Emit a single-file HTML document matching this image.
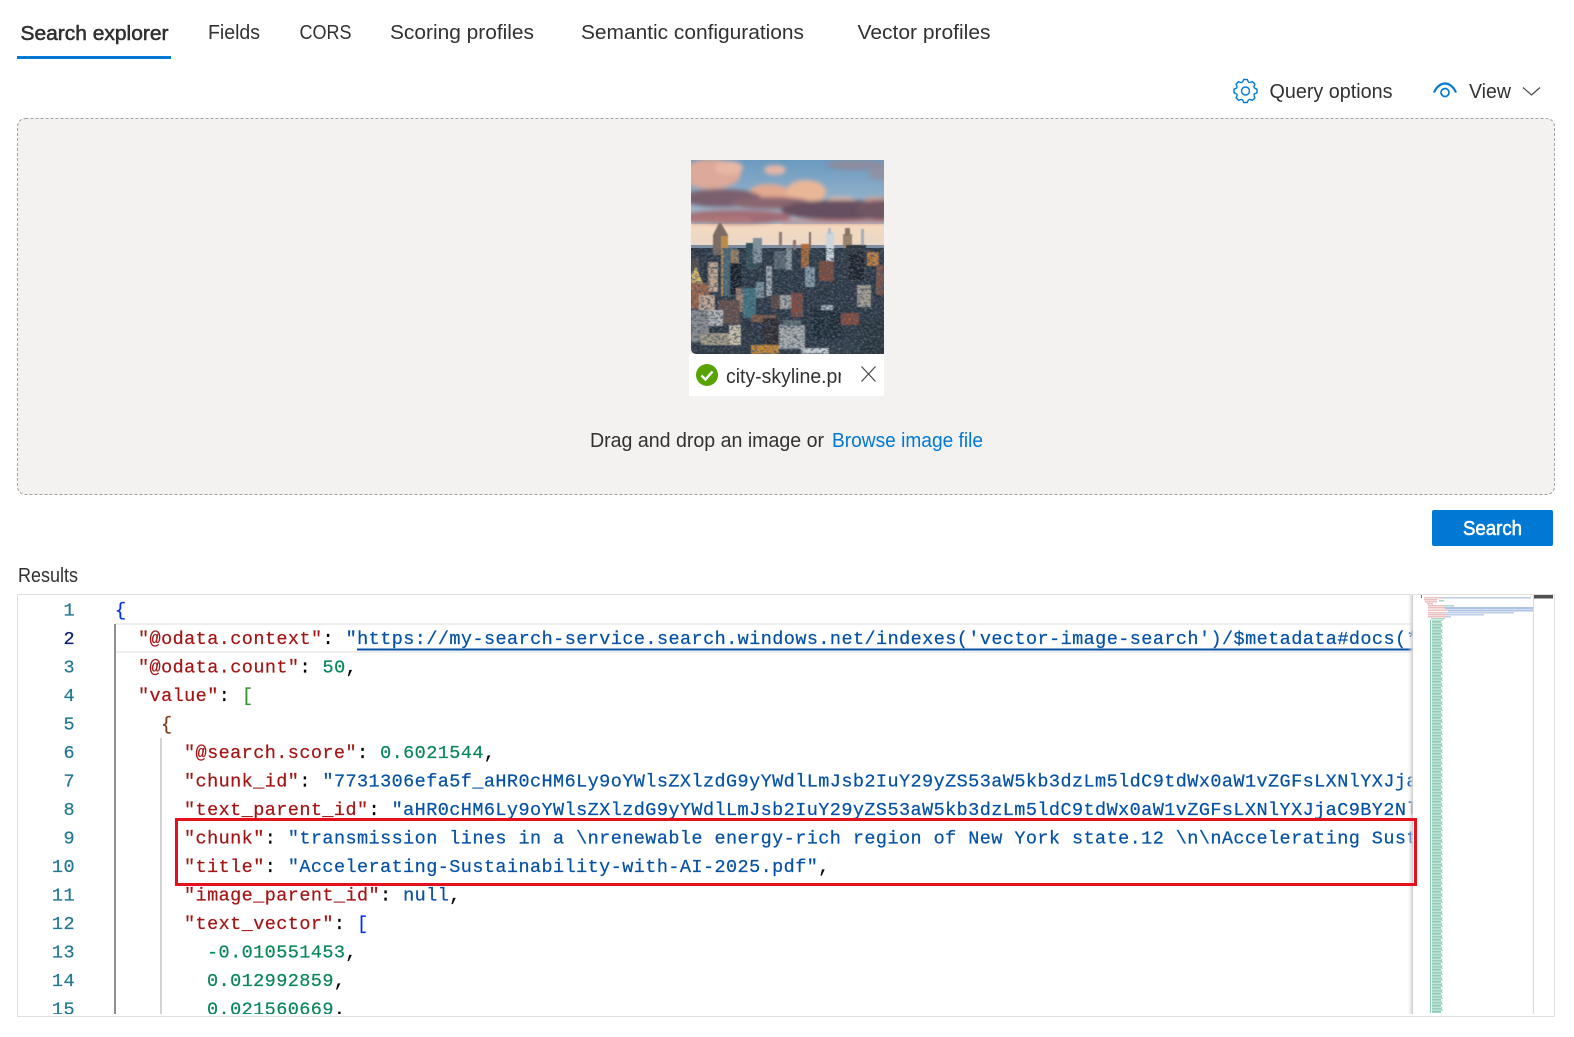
<!DOCTYPE html>
<html lang="en">
<head>
<meta charset="utf-8">
<title>Search explorer</title>
<style>
html,body{margin:0;padding:0;background:#fff;width:1574px;height:1037px;overflow:hidden}
svg{display:block}
.ui{font-family:"Liberation Sans",sans-serif;font-size:20px;fill:#323130}
.code{font-family:"Liberation Mono",monospace;font-size:18.5px;letter-spacing:.43px;white-space:pre;stroke-width:.22px}
.ln{fill:#237893;stroke:#237893;text-anchor:end}
.k{fill:#a31515;stroke:#a31515}.s{fill:#0451a5;stroke:#0451a5}.n{fill:#098658;stroke:#098658}.p{fill:#000;stroke:#000}
</style>
</head>
<body>
<svg width="1574" height="1037" viewBox="0 0 1574 1037" xmlns="http://www.w3.org/2000/svg">
<defs>
<clipPath id="codeclip"><rect x="100" y="595" width="1313" height="419"/></clipPath>
<clipPath id="lnclip"><rect x="18" y="595" width="90" height="419"/></clipPath>
<clipPath id="fileclip"><rect x="720" y="360" width="121" height="32"/></clipPath>
<clipPath id="imgclip"><path d="M691 160H884V354H697Q691 354 691 348Z"/></clipPath>
<linearGradient id="sky" x1="0" y1="0" x2="0" y2="1"><stop offset="0" stop-color="#6a9abf"/><stop offset="1" stop-color="#b5c4d2"/></linearGradient>
<linearGradient id="hor" x1="0" y1="0" x2="0" y2="1"><stop offset="0" stop-color="#f5d9be"/><stop offset="1" stop-color="#e9d8c8"/></linearGradient>
<linearGradient id="shadow" x1="0" y1="0" x2="1" y2="0"><stop offset="0" stop-color="#ddd" stop-opacity="0"/><stop offset="1" stop-color="#ccc"/></linearGradient>
<filter id="b2"><feGaussianBlur stdDeviation="2.2"/></filter>
<filter id="b1"><feGaussianBlur stdDeviation=".6"/></filter>
<filter id="nlight" x="0" y="0" width="100%" height="100%"><feTurbulence type="fractalNoise" baseFrequency=".38 .5" numOctaves="2" seed="7"/><feColorMatrix values="0 0 0 0 .8  0 0 0 0 .72  0 0 0 0 .66  3.2 0 0 0 -1.6"/></filter>
<filter id="ndark" x="0" y="0" width="100%" height="100%"><feTurbulence type="fractalNoise" baseFrequency=".3 .42" numOctaves="2" seed="21"/><feColorMatrix values="0 0 0 0 .06  0 0 0 0 .09  0 0 0 0 .13  3.2 0 0 0 -1.35"/></filter>
<pattern id="mmgreen" width="13" height="6" patternUnits="userSpaceOnUse">
<rect x="0" y="0" width="1" height="6" fill="#2f9a70" opacity=".55"/>
<rect x="2" y="0" width="10" height="1.500" fill="#5fb595" opacity=".65"/>
<rect x="2" y="1.500" width="11" height="1.500" fill="#8ccfb4" opacity=".6"/>
<rect x="2" y="3" width="9" height="1.500" fill="#5fb595" opacity=".7"/>
<rect x="2" y="4.500" width="10.500" height="1.500" fill="#8ccfb4" opacity=".55"/>
</pattern>
<path id="tooth" d="M-2.900-8.900L-1.800-11.500H1.800L2.900-8.900L4.240-8.340"/>
</defs>

<!-- tabs -->
<text class="ui" x="20.500" y="40" style="fill:#323130;stroke:#323130;stroke-width:.55px" textLength="148" lengthAdjust="spacingAndGlyphs">Search explorer</text>
<text class="ui" x="208" y="39" textLength="52" lengthAdjust="spacingAndGlyphs">Fields</text>
<text class="ui" x="299.500" y="39" textLength="52" lengthAdjust="spacingAndGlyphs">CORS</text>
<text class="ui" x="390" y="39" textLength="144" lengthAdjust="spacingAndGlyphs">Scoring profiles</text>
<text class="ui" x="581" y="39" textLength="223" lengthAdjust="spacingAndGlyphs">Semantic configurations</text>
<text class="ui" x="857.500" y="39" textLength="133" lengthAdjust="spacingAndGlyphs">Vector profiles</text>
<rect x="17" y="56" width="154" height="3" fill="#0078d4"/>

<!-- toolbar -->
<g fill="none" stroke="#0078d4" stroke-width="1.400" stroke-linejoin="round" transform="translate(1245.500 91)">
<use href="#tooth"/>
<use href="#tooth" transform="rotate(45)"/>
<use href="#tooth" transform="rotate(90)"/>
<use href="#tooth" transform="rotate(135)"/>
<use href="#tooth" transform="rotate(180)"/>
<use href="#tooth" transform="rotate(225)"/>
<use href="#tooth" transform="rotate(270)"/>
<use href="#tooth" transform="rotate(315)"/>
<circle r="4"/>
</g>
<text class="ui" x="1269.500" y="98" textLength="123" lengthAdjust="spacingAndGlyphs">Query options</text>
<g fill="none" stroke="#0078d4" stroke-width="2">
<path d="M1434 92.500C1437 85.500 1442 83.500 1445 83.500S1453 85.500 1456 92.500" stroke-width="2.200"/>
<circle cx="1445" cy="92.500" r="4" stroke-width="1.700"/>
</g>
<text class="ui" x="1469" y="98" textLength="42" lengthAdjust="spacingAndGlyphs">View</text>
<path d="M1523 87.500L1531.500 95L1540 87.500" fill="none" stroke="#484644" stroke-width="1.200"/>

<!-- drop zone -->
<rect x="17.500" y="118.500" width="1537" height="376" rx="8" fill="#f3f2f1" stroke="#a19f9d" stroke-width="1" stroke-dasharray="3 2"/>

<!-- image chip -->
<rect x="689" y="354" width="195" height="42" fill="#fff"/>
<g clip-path="url(#imgclip)">
<g transform="translate(691 160)">
<rect width="193" height="75" fill="url(#sky)"/>
<rect y="64" width="193" height="24" fill="url(#hor)"/>
<g filter="url(#b2)">
<ellipse cx="20" cy="14" rx="30" ry="15" fill="#dca99a"/>
<ellipse cx="38" cy="8" rx="14" ry="7" fill="#e8b8a4"/>
<ellipse cx="84" cy="10" rx="11" ry="5" fill="#e6b6a6"/>
<ellipse cx="165" cy="5" rx="30" ry="5" fill="#8d8c9e"/>
<ellipse cx="188" cy="14" rx="10" ry="6" fill="#8f92a4"/>
<ellipse cx="78" cy="33" rx="20" ry="9" fill="#e3a890"/>
<ellipse cx="115" cy="32" rx="20" ry="12" fill="#e9b698"/>
<ellipse cx="150" cy="40" rx="14" ry="3" fill="#e8bda8"/>
<ellipse cx="185" cy="40" rx="12" ry="3" fill="#d4a196"/>
<ellipse cx="30" cy="38" rx="40" ry="9" fill="#7a616e"/>
<ellipse cx="80" cy="43" rx="40" ry="6" fill="#8a666f"/>
<ellipse cx="150" cy="50" rx="60" ry="10" fill="#665060"/>
<ellipse cx="190" cy="50" rx="25" ry="10" fill="#6f5563"/>
<ellipse cx="45" cy="57" rx="55" ry="7" fill="#a06c74"/>
<rect x="0" y="56" width="60" height="7" fill="#ac7779"/>
<rect x="90" y="60" width="103" height="3" fill="#c08280"/>
</g>
<rect y="85" width="193" height="110" fill="#2a3542"/>
<rect y="85" width="193" height="3" fill="#7e8ea0"/>
<g filter="url(#b1)">
<path d="M22 75L28 63L30 63L37 75V95H22Z" fill="#7b6c66"/>
<rect x="30" y="76" width="7" height="60" fill="#b98c4c"/>
<rect x="32" y="88" width="14" height="48" fill="#4e6c78"/>
<rect x="40" y="90" width="8" height="45" fill="#9c7f60"/>
<rect x="55" y="83" width="12" height="26" fill="#325059"/>
<rect x="62" y="78" width="9" height="25" fill="#7f8f9b"/>
<rect x="88" y="72" width="3" height="14" fill="#8f7d78"/>
<rect x="83" y="91" width="12" height="18" fill="#5d6a76"/>
<rect x="95" y="88" width="6" height="22" fill="#8a949d"/>
<rect x="102" y="80" width="3" height="10" fill="#8d7670"/>
<rect x="110" y="84" width="8" height="24" fill="#b06a38"/>
<rect x="118" y="72" width="2" height="18" fill="#7e6a66"/>
<rect x="135" y="72" width="8" height="30" fill="#ccd4dc"/>
<rect x="137" y="68" width="3" height="6" fill="#b5bac4"/>
<rect x="152" y="74" width="9" height="14" fill="#97836e"/>
<rect x="154" y="68" width="5" height="8" fill="#85766a"/>
<rect x="170" y="69" width="3" height="24" fill="#a9acb5"/>
<rect x="155" y="85" width="20" height="36" fill="#33373f"/>
<rect x="158" y="92" width="15" height="28" fill="#1a222b"/>
<rect x="128" y="101" width="15" height="20" fill="#7f4a38"/>
<rect x="176" y="92" width="12" height="14" fill="#c07c3c"/>
<rect x="185" y="105" width="8" height="30" fill="#7d5348"/>
<rect x="0" y="98" width="8" height="30" fill="#514c4a"/>
<rect x="17" y="102" width="10" height="30" fill="#c0a48e"/>
<rect x="39" y="103" width="11" height="32" fill="#141e28"/>
<path d="M0 125V114L5 107L12 123H17V135H0Z" fill="#d8b468"/>
<rect x="0" y="123" width="18" height="26" fill="#a0664a"/>
<rect x="8" y="135" width="16" height="16" fill="#c0a692"/>
<rect x="45" y="128" width="14" height="24" fill="#a38477"/>
<rect x="52" y="128" width="13" height="30" fill="#417682"/>
<rect x="65" y="122" width="8" height="16" fill="#7d94a0"/>
<rect x="75" y="106" width="6" height="30" fill="#a0a7ae"/>
<rect x="114" y="107" width="10" height="20" fill="#8499a8"/>
<rect x="80" y="135" width="30" height="14" fill="#5e4640"/>
<rect x="89" y="135" width="12" height="14" fill="#a5a5a3"/>
<rect x="100" y="133" width="12" height="24" fill="#85493d"/>
<rect x="166" y="125" width="14" height="22" fill="#a49c92"/>
<rect x="27" y="140" width="22" height="24" fill="#68504a"/>
<rect x="0" y="150" width="18" height="32" fill="#8b8d90"/>
<rect x="18" y="150" width="14" height="16" fill="#b0b3b5"/>
<rect x="10" y="173" width="40" height="12" fill="#a59c88"/>
<rect x="38" y="165" width="12" height="20" fill="#c8bea8"/>
<rect x="60" y="155" width="25" height="7" fill="#8a5a42"/>
<rect x="72" y="158" width="16" height="30" fill="#2e2a2e"/>
<rect x="88" y="165" width="26" height="24" fill="#a8abad"/>
<rect x="92" y="160" width="18" height="6" fill="#5d6e72"/>
<rect x="130" y="145" width="12" height="8" fill="#a8b4bc"/>
<rect x="150" y="153" width="18" height="12" fill="#8c483a"/>
<rect x="60" y="185" width="28" height="9" fill="#c98832"/>
<rect x="110" y="188" width="28" height="6" fill="#c8cfd4"/>
<rect x="18" y="185" width="30" height="9" fill="#2c3641"/>
<rect x="140" y="180" width="30" height="14" fill="#2e3a46"/>
<rect x="170" y="160" width="23" height="34" fill="#25303b"/>
<rect x="120" y="150" width="30" height="28" fill="#1f2b36"/>
</g>
<rect y="88" width="193" height="106" filter="url(#ndark)" opacity=".8"/>
<rect y="88" width="193" height="106" filter="url(#nlight)" opacity=".22"/>
</g>
</g>
<circle cx="707" cy="375" r="11" fill="#57a300"/>
<path d="M701.500 375.500L705.500 379.500L712.500 371.500" fill="none" stroke="#fff" stroke-width="2.400"/>
<text class="ui" clip-path="url(#fileclip)" x="726" y="383" textLength="133" lengthAdjust="spacingAndGlyphs">city-skyline.png</text>
<path d="M861.500 366.500L875.500 381.500M875.500 366.500L861.500 381.500" stroke="#484644" stroke-width="1.200" fill="none"/>

<text class="ui" x="590" y="447" textLength="234" lengthAdjust="spacingAndGlyphs">Drag and drop an image or</text>
<text class="ui" x="832" y="447" style="fill:#0078d4" textLength="151" lengthAdjust="spacingAndGlyphs">Browse image file</text>

<!-- button -->
<rect x="1432" y="510" width="121" height="36" rx="2" fill="#0078d4"/>
<text class="ui" x="1463" y="535" style="fill:#fff;stroke:#fff;stroke-width:.55px" textLength="59" lengthAdjust="spacingAndGlyphs">Search</text>

<text class="ui" x="18" y="582" textLength="60" lengthAdjust="spacingAndGlyphs">Results</text>

<!-- editor -->
<rect x="17.500" y="594.500" width="1537" height="422" fill="#fff" stroke="#e1dfdd"/>
<rect x="115" y="624" width="1298" height="28" fill="#fff" stroke="#eeeeee" stroke-width="2"/>
<rect x="114" y="624" width="2" height="390" fill="#8f8f8f"/>
<rect x="160" y="738" width="2" height="276" fill="#d3d3d3"/>

<g clip-path="url(#lnclip)">
<g class="code" transform="translate(0 -.5)">
<text class="ln" x="75" y="616">1</text>
<text class="ln" x="75" y="644.500" style="fill:#0b216f;stroke:#0b216f">2</text>
<text class="ln" x="75" y="673">3</text>
<text class="ln" x="75" y="701.500">4</text>
<text class="ln" x="75" y="730">5</text>
<text class="ln" x="75" y="758.500">6</text>
<text class="ln" x="75" y="787">7</text>
<text class="ln" x="75" y="815.500">8</text>
<text class="ln" x="75" y="844">9</text>
<text class="ln" x="75" y="872.500">10</text>
<text class="ln" x="75" y="901">11</text>
<text class="ln" x="75" y="929.500">12</text>
<text class="ln" x="75" y="958">13</text>
<text class="ln" x="75" y="986.500">14</text>
<text class="ln" x="75" y="1015">15</text>
</g>
</g>

<g clip-path="url(#codeclip)">
<g class="code" transform="translate(0 -.5)">
<text x="115" y="616" style="fill:#0431fa;stroke:#0431fa">{</text>
<text x="138" y="644.500"><tspan class="k">"@odata.context"</tspan><tspan class="p">: </tspan><tspan class="s">"https://my-search-service.search.windows.net/indexes('vector-image-search')/$metadata#docs(*)"</tspan></text>
<rect x="357" y="649" width="1056" height="2" fill="#0451a5"/>
<text x="138" y="673"><tspan class="k">"@odata.count"</tspan><tspan class="p">: </tspan><tspan class="n">50</tspan><tspan class="p">,</tspan></text>
<text x="138" y="701.500"><tspan class="k">"value"</tspan><tspan class="p">: </tspan><tspan style="fill:#319331;stroke:#319331">[</tspan></text>
<text x="161" y="730" style="fill:#7b3814;stroke:#7b3814">{</text>
<text x="184" y="758.500"><tspan class="k">"@search.score"</tspan><tspan class="p">: </tspan><tspan class="n">0.6021544</tspan><tspan class="p">,</tspan></text>
<text x="184" y="787"><tspan class="k">"chunk_id"</tspan><tspan class="p">: </tspan><tspan class="s">"7731306efa5f_aHR0cHM6Ly9oYWlsZXlzdG9yYWdlLmJsb2IuY29yZS53aW5kb3dzLm5ldC9tdWx0aW1vZGFsLXNlYXJjaC9BY2N"</tspan></text>
<text x="184" y="815.500"><tspan class="k">"text_parent_id"</tspan><tspan class="p">: </tspan><tspan class="s">"aHR0cHM6Ly9oYWlsZXlzdG9yYWdlLmJsb2IuY29yZS53aW5kb3dzLm5ldC9tdWx0aW1vZGFsLXNlYXJjaC9BY2NlbGVyYXRpbmc"</tspan></text>
<text x="184" y="844"><tspan class="k">"chunk"</tspan><tspan class="p">: </tspan><tspan class="s">"transmission lines in a \nrenewable energy-rich region of New York state.12 \n\nAccelerating Sustainability"</tspan></text>
<text x="184" y="872.500"><tspan class="k">"title"</tspan><tspan class="p">: </tspan><tspan class="s">"Accelerating-Sustainability-with-AI-2025.pdf"</tspan><tspan class="p">,</tspan></text>
<text x="184" y="901"><tspan class="k">"image_parent_id"</tspan><tspan class="p">: </tspan><tspan class="s">null</tspan><tspan class="p">,</tspan></text>
<text x="184" y="929.500"><tspan class="k">"text_vector"</tspan><tspan class="p">: </tspan><tspan style="fill:#0431fa;stroke:#0431fa">[</tspan></text>
<text x="207" y="958"><tspan class="n">-0.010551453</tspan><tspan class="p">,</tspan></text>
<text x="207" y="986.500"><tspan class="n">0.012992859</tspan><tspan class="p">,</tspan></text>
<text x="207" y="1015"><tspan class="n">0.021560669</tspan><tspan class="p">.</tspan></text>
</g>
</g>

<!-- minimap -->
<rect x="1408" y="595" width="5" height="419" fill="url(#shadow)"/>
<rect x="1413" y="595" width="120" height="421" fill="#fff"/>
<rect x="1533" y="595" width="1" height="419" fill="#d8d8d8"/>
<rect x="1534" y="595" width="19" height="3.500" fill="#505050"/>
<rect x="1421" y="595" width="1" height="3" fill="#777"/>
<g opacity=".5">
<rect x="1424" y="597" width="17" height="1.500" fill="#d98080"/>
<rect x="1424" y="599" width="13" height="1.500" fill="#d98080"/>
<rect x="1425" y="601" width="12" height="1.500" fill="#d98080"/>
<rect x="1427" y="603" width="6" height="1.500" fill="#d98080"/>
<rect x="1441" y="597" width="90" height="1.500" fill="#7f9fd0"/>
<rect x="1439" y="600" width="5" height="1.500" fill="#55b090"/>
<rect x="1428" y="605" width="16" height="1.500" fill="#d98080"/>
<rect x="1444" y="605" width="10" height="1.500" fill="#55b090"/>
<rect x="1428" y="607" width="17" height="1.500" fill="#d98080"/>
<rect x="1445" y="607" width="88" height="2" fill="#5c86c8"/>
<rect x="1428" y="609.500" width="20" height="1.500" fill="#d98080"/>
<rect x="1448" y="609.500" width="85" height="2" fill="#5c86c8"/>
<rect x="1428" y="612" width="16" height="1.500" fill="#d98080"/>
<rect x="1444" y="612" width="70" height="1.500" fill="#7f9fd0"/>
<rect x="1428" y="614" width="20" height="1.500" fill="#d98080"/>
<rect x="1448" y="614" width="36" height="1.500" fill="#7f9fd0"/>
<rect x="1428" y="616" width="18" height="1.500" fill="#d98080"/>
<rect x="1446" y="616" width="5" height="1.500" fill="#7f9fd0"/>
<rect x="1431" y="618" width="14" height="1.500" fill="#55b090"/>
</g>
<rect x="1430" y="620" width="13" height="393" fill="url(#mmgreen)"/>

<!-- red highlight -->
<rect x="176.500" y="819.500" width="1239" height="65" fill="none" stroke="#e3101e" stroke-width="3"/>
</svg>
</body>
</html>
